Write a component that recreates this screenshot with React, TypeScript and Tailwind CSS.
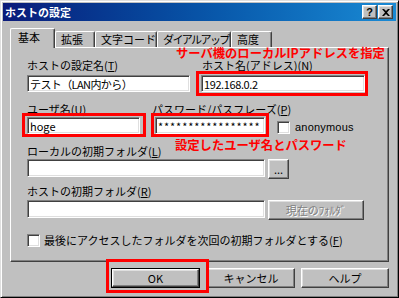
import React from 'react';

const raised =
  'border border-t-white border-l-white border-r-[#404040] border-b-[#404040] shadow-[inset_-1px_-1px_0_#808080,inset_1px_1px_0_#dfdfdf] bg-[#c0c0c0]';
const sunken =
  'border border-t-[#808080] border-l-[#808080] border-r-white border-b-white shadow-[inset_1px_1px_0_#404040,inset_-1px_-1px_0_#dfdfdf] bg-white';

const Field = ({ className = '', children }: { className?: string; children?: React.ReactNode }) => (
  <div className={`${sunken} flex items-center pl-[2px] text-[11px] leading-[14px] text-black ${className}`}>
    {children}
  </div>
);

const Label = ({ text, k }: { text: string; k: string }) => (
  <div className="h-[14px] pt-[2px] text-[11px] leading-[12px] whitespace-nowrap">
    {text}(<u>{k}</u>)
  </div>
);

const Check = ({ className = '' }: { className?: string }) => (
  <div className={`${sunken} w-[13px] h-[13px] shrink-0 ${className}`} />
);

const tabs = [
  { label: '拡張', w: 'w-[40px]', x: '' },
  { label: '文字コード', w: 'w-[62px]', x: '' },
  { label: 'ダイアルアップ', w: 'w-[74px]', x: 'tracking-[-1.6px]' },
  { label: '高度', w: 'w-[41px]', x: '' },
];

export default function App() {
  return (
    <div className="relative w-[399px] h-[298px] overflow-hidden bg-[#c0c0c0] font-['Noto_Sans_CJK_JP',sans-serif] text-black">
      <div className="h-full border border-t-[#dfdfdf] border-l-[#dfdfdf] border-r-black border-b-black shadow-[inset_1px_1px_0_#fff,inset_-1px_-1px_0_#808080] p-[2px]">
        {/* title bar */}
        <div className="h-[18px] flex items-center justify-between bg-linear-to-r from-[#0a1a7a] to-[#1a8ad4] pl-[2px] pr-[3px]">
          <span className="text-white font-bold text-[11px] leading-[14px]">ホストの設定</span>
          <div className="flex gap-[1px]">
            <div className={`${raised} w-[15px] h-[14px] flex items-center justify-center text-[11px] font-bold leading-none font-['Liberation_Sans',sans-serif]`}>?</div>
            <div className={`${raised} w-[15px] h-[14px] flex items-center justify-center`}>
              <svg width="8" height="7" viewBox="0 0 8 7">
                <path d="M0 0h2l2 2 2-2h2L5 3.5 8 7H6L4 5 2 7H0l3-3.5z" fill="#000" />
              </svg>
            </div>
          </div>
        </div>

        <div className="px-[7px] pt-[7px]">
          {/* tabs */}
          <div className="flex items-end h-[19px]">
            <div className="relative z-10 -mb-[1px] h-[20px] w-[45px] rounded-t-[2px] border-t border-l border-white border-r border-r-[#404040] shadow-[inset_-1px_0_0_#808080] bg-[#c0c0c0] pl-[7px] pt-[1px] text-[11px] leading-[14px]">
              基本
            </div>
            {tabs.map((t) => (
              <div
                key={t.label}
                className={`${t.w} ${t.x} h-[16px] rounded-t-[2px] border-t border-l border-white border-r border-r-[#404040] shadow-[inset_-1px_0_0_#808080] pl-[5px] text-[11px] leading-[14px] whitespace-nowrap overflow-hidden`}
              >
                {t.label}
              </div>
            ))}
          </div>

          {/* tab panel */}
          <div className="h-[215px] border border-t-white border-l-white border-r-[#404040] border-b-[#404040] shadow-[inset_-1px_-1px_0_#808080] pl-[16px] pt-[9px]">
            <div className="flex gap-[11px]">
              <div className="w-[163px]">
                <Label text="ホストの設定名" k="T" />
                <Field className="mt-[4px] h-[17px] tracking-[-0.6px]">テスト（LAN内から）</Field>
              </div>
              <div>
                <div className="pl-[1px]">
                  <Label text="ホスト名(アドレス)" k="N" />
                </div>
                <Field className="mt-[4px] h-[17px] w-[164px] tracking-[-0.4px]">192.168.0.2</Field>
              </div>
            </div>

            <div className="flex mt-[9px]">
              <div className="w-[125px]">
                <Label text="ユーザ名" k="U" />
                <Field className="mt-[2px] h-[17px] w-[113px]">hoge</Field>
              </div>
              <div>
                <Label text="パスワード/パスフレーズ" k="P" />
                <div className="flex items-start">
                  <Field className="ml-[3px] mt-[2px] h-[17px] w-[110px] tracking-[0.9px]">*****************</Field>
                  <Check className="ml-[12px] mt-[6px]" />
                  <span className="ml-[5px] mt-[6px] text-[11px] leading-[13px] font-['Liberation_Sans',sans-serif] tracking-[0.2px]">
                    anonymous
                  </span>
                </div>
              </div>
            </div>

            <div className="mt-[9px]">
              <Label text="ローカルの初期フォルダ" k="L" />
              <div className="flex gap-[3px] mt-[2px]">
                <Field className="h-[18px] w-[238px]" />
                <div className={`${raised} w-[21px] h-[20px] flex items-center justify-center text-[11px] leading-none`}>...</div>
              </div>
            </div>

            <div className="mt-[4px]">
              <Label text="ホストの初期フォルダ" k="R" />
              <div className="flex gap-[3px] mt-[3px]">
                <Field className="h-[18px] w-[238px]" />
                <div className={`${raised} w-[96px] h-[20px] flex items-center justify-center text-[11px] leading-none text-[#808080] [text-shadow:1px_1px_0_#fff]`}>
                  現在のﾌｫﾙﾀﾞ
                </div>
              </div>
            </div>

            <div className="flex items-center gap-[4px] mt-[13px]">
              <Check />
              <span className="text-[11px] leading-[14px] whitespace-nowrap">
                最後にアクセスしたフォルダを次回の初期フォルダとする(<u>F</u>)
              </span>
            </div>
          </div>

          {/* buttons */}
          <div className="flex justify-end gap-[6px] mt-[6px]">
            <div className="border border-black mr-[1px]">
              <div className={`${raised} w-[87px] h-[18px] flex items-center justify-center text-[11px] leading-none`}>OK</div>
            </div>
            <div className={`${raised} w-[88px] h-[20px] flex items-center justify-center text-[11px] leading-none`}>キャンセル</div>
            <div className={`${raised} w-[88px] h-[20px] flex items-center justify-center text-[11px] leading-none`}>ヘルプ</div>
          </div>
        </div>
      </div>

      {/* red annotations */}
      <div className="absolute left-[176px] top-[47px] text-[12.3px] leading-[12px] font-bold text-[#ff0000] whitespace-nowrap">
        サーバ機のローカルIPアドレスを指定
      </div>
      <div className="absolute left-[196px] top-[71px] w-[172px] h-[25px] border-[3px] border-[#ff0000]" />
      <div className="absolute left-[22px] top-[113px] w-[124px] h-[24px] border-[3px] border-[#ff0000]" />
      <div className="absolute left-[151px] top-[113px] w-[118px] h-[24px] border-[3px] border-[#ff0000]" />
      <div className="absolute left-[175px] top-[139px] text-[12.3px] leading-[12px] font-bold text-[#ff0000] whitespace-nowrap">
        設定したユーザ名とパスワード
      </div>
      <div className="absolute left-[106px] top-[259px] w-[103px] h-[34px] border-[3px] border-[#ff0000]" />
    </div>
  );
}
